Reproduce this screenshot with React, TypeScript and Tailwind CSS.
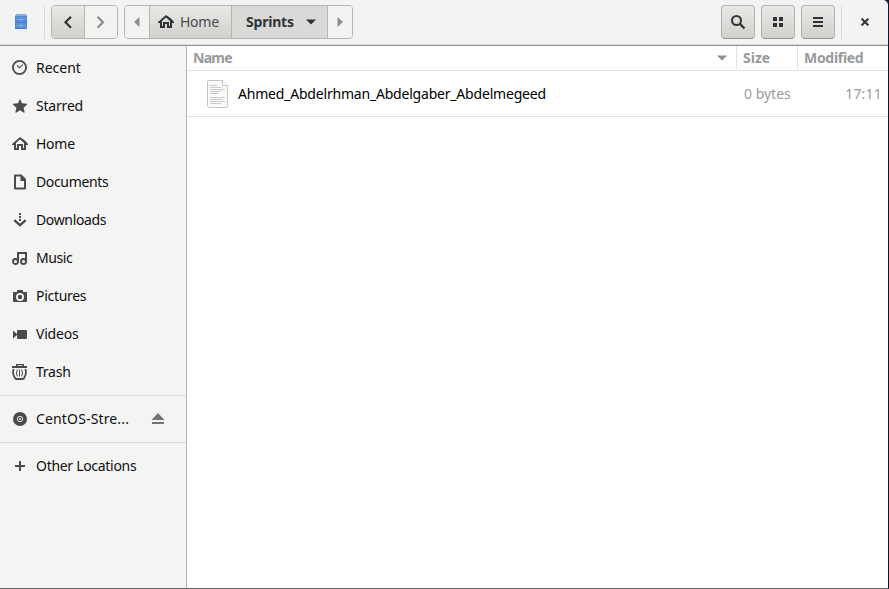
import React from "react";

const Svg = ({ children, className = "" }: { children: React.ReactNode; className?: string }) => (
  <svg viewBox="0 0 16 16" width="16" height="16" fill="currentColor" className={`shrink-0 ${className}`}>
    {children}
  </svg>
);

const HomeIcon = () => (
  <Svg>
    <path d="M8 1 0 8v1h2v5h5v-4h2v4h5V9h2V8L13 4.500 8 1zm0 2.400L12 7v5h-1V8H5v4H4V7l4-3.600z" fillRule="evenodd" />
  </Svg>
);

const icons: Record<string, React.ReactNode> = {
  Recent: (
    <Svg>
      <circle cx="7.500" cy="7.500" r="6.600" fill="none" stroke="currentColor" strokeWidth="1.8" />
      <path d="m5 5.500 2.500 2.300L11 4.700" fill="none" stroke="currentColor" strokeWidth="1.100" />
    </Svg>
  ),
  Starred: (
    <Svg>
      <path d="m8 1 2 4.300 5 .4v1l-3.500 3 1.300 4.800h-1.500L8 12.300l-3.300 2.200H3.200l1.300-4.800L1 6.700v-1l5-.4z" />
    </Svg>
  ),
  Home: <HomeIcon />,
  Documents: (
    <Svg>
      <path d="M3 0.500h6.500L14 5v9.500q0 1-1 1H3q-1 0-1-1v-13q0-1 1-1zM4 2.500v11h8V7H8.500V2.500z" fillRule="evenodd" />
    </Svg>
  ),
  Downloads: (
    <Svg>
      <path d="M7 1h2v2H7zM7 4h2v2H7zM7 7h2v2H7z" />
      <path d="m2.300 8.200 5.700 5 5.700-5" fill="none" stroke="currentColor" strokeWidth="2.200" />
    </Svg>
  ),
  Music: (
    <Svg>
      <path d="M6 11.500V3h8v8.500" fill="none" stroke="currentColor" strokeWidth="2" />
      <circle cx="3.500" cy="11.500" r="2.500" fill="none" stroke="currentColor" strokeWidth="1.900" />
      <circle cx="11.500" cy="11.500" r="2.500" fill="none" stroke="currentColor" strokeWidth="1.900" />
    </Svg>
  ),
  Pictures: (
    <Svg>
      <path d="M5 2h6v2h3q1 0 1 1v8q0 1-1 1H2q-1 0-1-1V5q0-1 1-1h3z" />
      <circle cx="8" cy="9" r="3.100" fill="none" stroke="#f4f4f2" strokeWidth="1.800" />
    </Svg>
  ),
  Videos: (
    <Svg>
      <path d="M1 4.500 5 8V5q0-1 1-1h8q1 0 1 1v7q0 1-1 1H6q-1 0-1-1V9l-4 3.500z" />
    </Svg>
  ),
  Trash: (
    <Svg>
      <path d="M4 0h8v2h3v2H0V2h4zM5.500 1.200V2h5v-.8z" fillRule="evenodd" />
      <path d="M1.700 5q-1.700 4 1 8.500Q3 15 4.500 15h6q1.500 0 1.800-1.500Q15 9 13.300 5" fill="none" stroke="currentColor" strokeWidth="1.800" />
      <path d="M5.300 5.500q-1.600 3.500 0 7M9.700 5.500q1.600 3.500 0 7M7.500 5.500v7" fill="none" stroke="currentColor" strokeWidth="1" />
    </Svg>
  ),
};

const places: [string, string][] = [
  ["Recent", "tracking-[0px]"],
  ["Starred", "tracking-[-0.2px]"],
  ["Home", "tracking-[-0.25px]"],
  ["Documents", "tracking-[-0.35px]"],
  ["Downloads", "tracking-[-0.35px]"],
  ["Music", "tracking-[-0.4px]"],
  ["Pictures", "tracking-[-0.3px]"],
  ["Videos", "tracking-[-0.2px]"],
  ["Trash", "tracking-[-0.25px]"],
];

const raised = "bg-gradient-to-b from-[#e9e9e7] to-[#d0d0cc]";

const ToolButton = ({ children }: { children: React.ReactNode }) => (
  <button className={`flex h-[34px] w-[34px] items-center justify-center rounded-[4px] border border-[#b1b1ad] border-b-[#96968f] ${raised}`}>
    {children}
  </button>
);

const Header = () => (
  <header className="flex h-[46px] shrink-0 items-start border-b border-[#92928e] bg-[#f3f3f3] pt-[5px] text-[#2e3436] shadow-[inset_0_-1px_0_#dcdcdb]">
    <svg width="12" height="16" viewBox="0 0 12 16" className="mt-[9px] ml-[15px]">
      <path d="M1.500 0h9l1.500 2v13H0V2z" fill="#5588d3" />
      <path d="M1.500 0h9L12 2H0z" fill="#87afe5" />
      <path d="M1 3h10v4H1zM1 9h10v5H1z" fill="#6092da" />
      <path d="M0 8h12v1H0zM0 14h12v1H0z" fill="#437bc9" />
      <path d="M4 5.500h4M4 11.500h4" stroke="#9fbce4" fill="none" strokeWidth="1" />
    </svg>
    <i className="ml-[17px] h-[34px] w-px bg-[#d9d9d7]" />
    <div className="ml-[6px] flex h-[34px] w-[67px] overflow-hidden rounded-[4px] border border-[#b4b4b0]">
      <button className={`flex w-[33px] items-center justify-center border-r border-[#b4b4b0] ${raised}`}>
        <svg width="16" height="16" viewBox="0 0 16 16" fill="none" stroke="currentColor" strokeWidth="2.200"><path d="m11 2.700-5.500 5.500 5.500 5.500" /></svg>
      </button>
      <button className="flex flex-1 items-center justify-center bg-[#f2f2f0] text-[#8b8e8f]">
        <svg width="16" height="16" viewBox="0 0 16 16" fill="none" stroke="currentColor" strokeWidth="2.200"><path d="m4.500 2.700 5.500 5.500-5.500 5.500" /></svg>
      </button>
    </div>
    <div className="ml-[6px] flex h-[34px] w-[229px] overflow-hidden rounded-[4px] border border-[#b4b4b0]">
      <button className="flex w-[25px] items-center border-r border-[#b4b4b0] bg-[#f2f2f0] pl-[9px] text-[#8b8e8f]">
        <svg width="6" height="10" fill="currentColor"><path d="M5.500 0v10L0 5z" /></svg>
      </button>
      <button className={`flex w-[82px] items-center border-r border-[#b4b4b0] pl-2 ${raised}`}>
        <HomeIcon />
        <span className="ml-[6px] pb-[2px] text-[14px] tracking-[-0.25px] text-[#474c4e]">Home</span>
      </button>
      <button className="flex w-[96px] items-center border-r border-[#b4b4b0] bg-[#d9d9d7] pl-[14px]">
        <span className="w-[60px] pb-[2px] text-left text-[14px] font-bold tracking-[-0.2px]">Sprints</span>
        <svg width="10" height="6" fill="currentColor"><path d="M0 .5h10L5 5.500z" /></svg>
      </button>
      <button className="flex flex-1 items-center bg-[#f2f2f0] pl-[9px] text-[#8b8e8f]">
        <svg width="6" height="10" fill="currentColor"><path d="M.5 0v10L6 5z" /></svg>
      </button>
    </div>
    <div className="mr-[19px] ml-auto flex items-center gap-[6px]">
      <ToolButton>
        <Svg>
          <circle cx="6.500" cy="6.500" r="4.500" fill="none" stroke="currentColor" strokeWidth="2" />
          <path d="m10 10 4.500 4.500" stroke="currentColor" strokeWidth="2.400" />
        </Svg>
      </ToolButton>
      <ToolButton>
        <Svg><path d="M3 3h4v4H3zM9 3h4v4H9zM3 9h4v4H3zM9 9h4v4H9z" /></Svg>
      </ToolButton>
      <ToolButton>
        <Svg><path d="M3 3h10v2H3zM3 7h10v2H3zM3 11h10v2H3z" /></Svg>
      </ToolButton>
      <i className="h-[34px] w-px bg-[#d9d9d7]" />
      <svg width="8" height="8" className="ml-[13px]" stroke="currentColor" strokeWidth="2"><path d="m.6.600 6.800 6.800M7.400.600.600 7.400" /></svg>
    </div>
  </header>
);

const Sidebar = () => (
  <aside className="w-[187px] shrink-0 border-r border-[#b4b4b0] bg-[#f4f4f2] pt-[3px] text-[14px] text-[#101010]">
    {places.map(([name, tracking]) => (
      <div key={name} className="flex h-[38px] items-center pl-3">
        <span className="text-[#4a4a48]">{icons[name]}</span>
        <span className={`ml-2 pb-[2px] ${tracking}`}>{name}</span>
      </div>
    ))}
    <div className="my-1 h-px bg-[#d9d9d7]" />
    <div className="flex h-[38px] items-center pl-3">
      <Svg className="text-[#4a4a48]">
        <circle cx="8" cy="8" r="7" />
        <circle cx="8" cy="8" r="2.700" fill="none" stroke="#e4e4e2" strokeWidth="1" />
        <circle cx="8" cy="8" r="1" fill="#e4e4e2" />
      </Svg>
      <span className="ml-2 w-[115px] pb-[2px] tracking-[0.15px]">CentOS-Stre...</span>
      <svg width="14" height="12" fill="#6e7374"><path d="M7 0l6.500 7H.5zM1 9h12v2H1z" /></svg>
    </div>
    <div className="my-1 h-px bg-[#d9d9d7]" />
    <div className="flex h-[38px] items-center pl-3">
      <Svg className="text-[#4a4a48]"><path d="M7 3h2v4h4v2H9v4H7V9H3V7h4z" /></Svg>
      <span className="ml-2 pb-[2px] tracking-[-0.3px]">Other Locations</span>
    </div>
  </aside>
);

const FileIcon = () => (
  <svg width="24" height="30" viewBox="0 0 24 30">
    <path d="M2.500 1.500h14l5 5v20q0 2-2 2h-16q-2 0-2-2v-24q0-1 1-1z" fill="#fafaf9" stroke="#c5c5c2" />
    <path d="M16.500 1.500v5h5" fill="#fff" stroke="#c5c5c2" />
    <path d="M4 6.500h7M4 8.500h11M4 10.500h15M4 12.500h11M4 14.500h9M4 18.500h15M4 20.500h13M4 22.500h15M4 24.500h11" stroke="#cbcbc9" />
  </svg>
);

const Files = () => (
  <main className="min-w-0 flex-1 bg-white">
    <div className="flex h-[25px] items-center border-b border-[#e3e3e1] text-[14px] font-bold text-[#979a9b]">
      <span className="flex h-full w-[550px] items-center justify-between border-r border-[#e3e3e1] pr-[9px] pl-[6px]">
        <span className="pb-[2px] tracking-[-0.7px]">Name</span>
        <svg width="10" height="6" fill="#8b8e8f"><path d="M0 .5h10L5 5.500z" /></svg>
      </span>
      <span className="flex h-full w-[61px] items-center border-r border-[#e3e3e1] pb-[2px] pl-[6px] tracking-[0px]">Size</span>
      <span className="pb-[2px] pl-[6px] tracking-[-0.3px]">Modified</span>
    </div>
    <div className="flex h-[46px] items-center border-b border-[#e3e3e1] pl-[19px] text-[14px] text-[#999c9d]">
      <FileIcon />
      <span className="ml-[8px] w-[497px] tracking-[-0.2px] text-black">Ahmed_Abdelrhman_Abdelgaber_Abdelmegeed</span>
      <span className="ml-[9px] flex-1 tracking-[0px]">0 bytes</span>
      <span className="pr-[6px] tracking-[0.2px]">17:11</span>
    </div>
  </main>
);

export default function App() {
  return (
    <div className="flex h-[589px] w-[889px] flex-col overflow-hidden border-r border-b border-r-[#10152a] border-b-[#646464] bg-[#10152a] font-['Noto_Sans',sans-serif]">
      <div className="flex min-h-0 flex-1 flex-col overflow-hidden rounded-tr-[5px]">
        <Header />
        <div className="flex min-h-0 flex-1">
          <Sidebar />
          <Files />
        </div>
      </div>
    </div>
  );
}
